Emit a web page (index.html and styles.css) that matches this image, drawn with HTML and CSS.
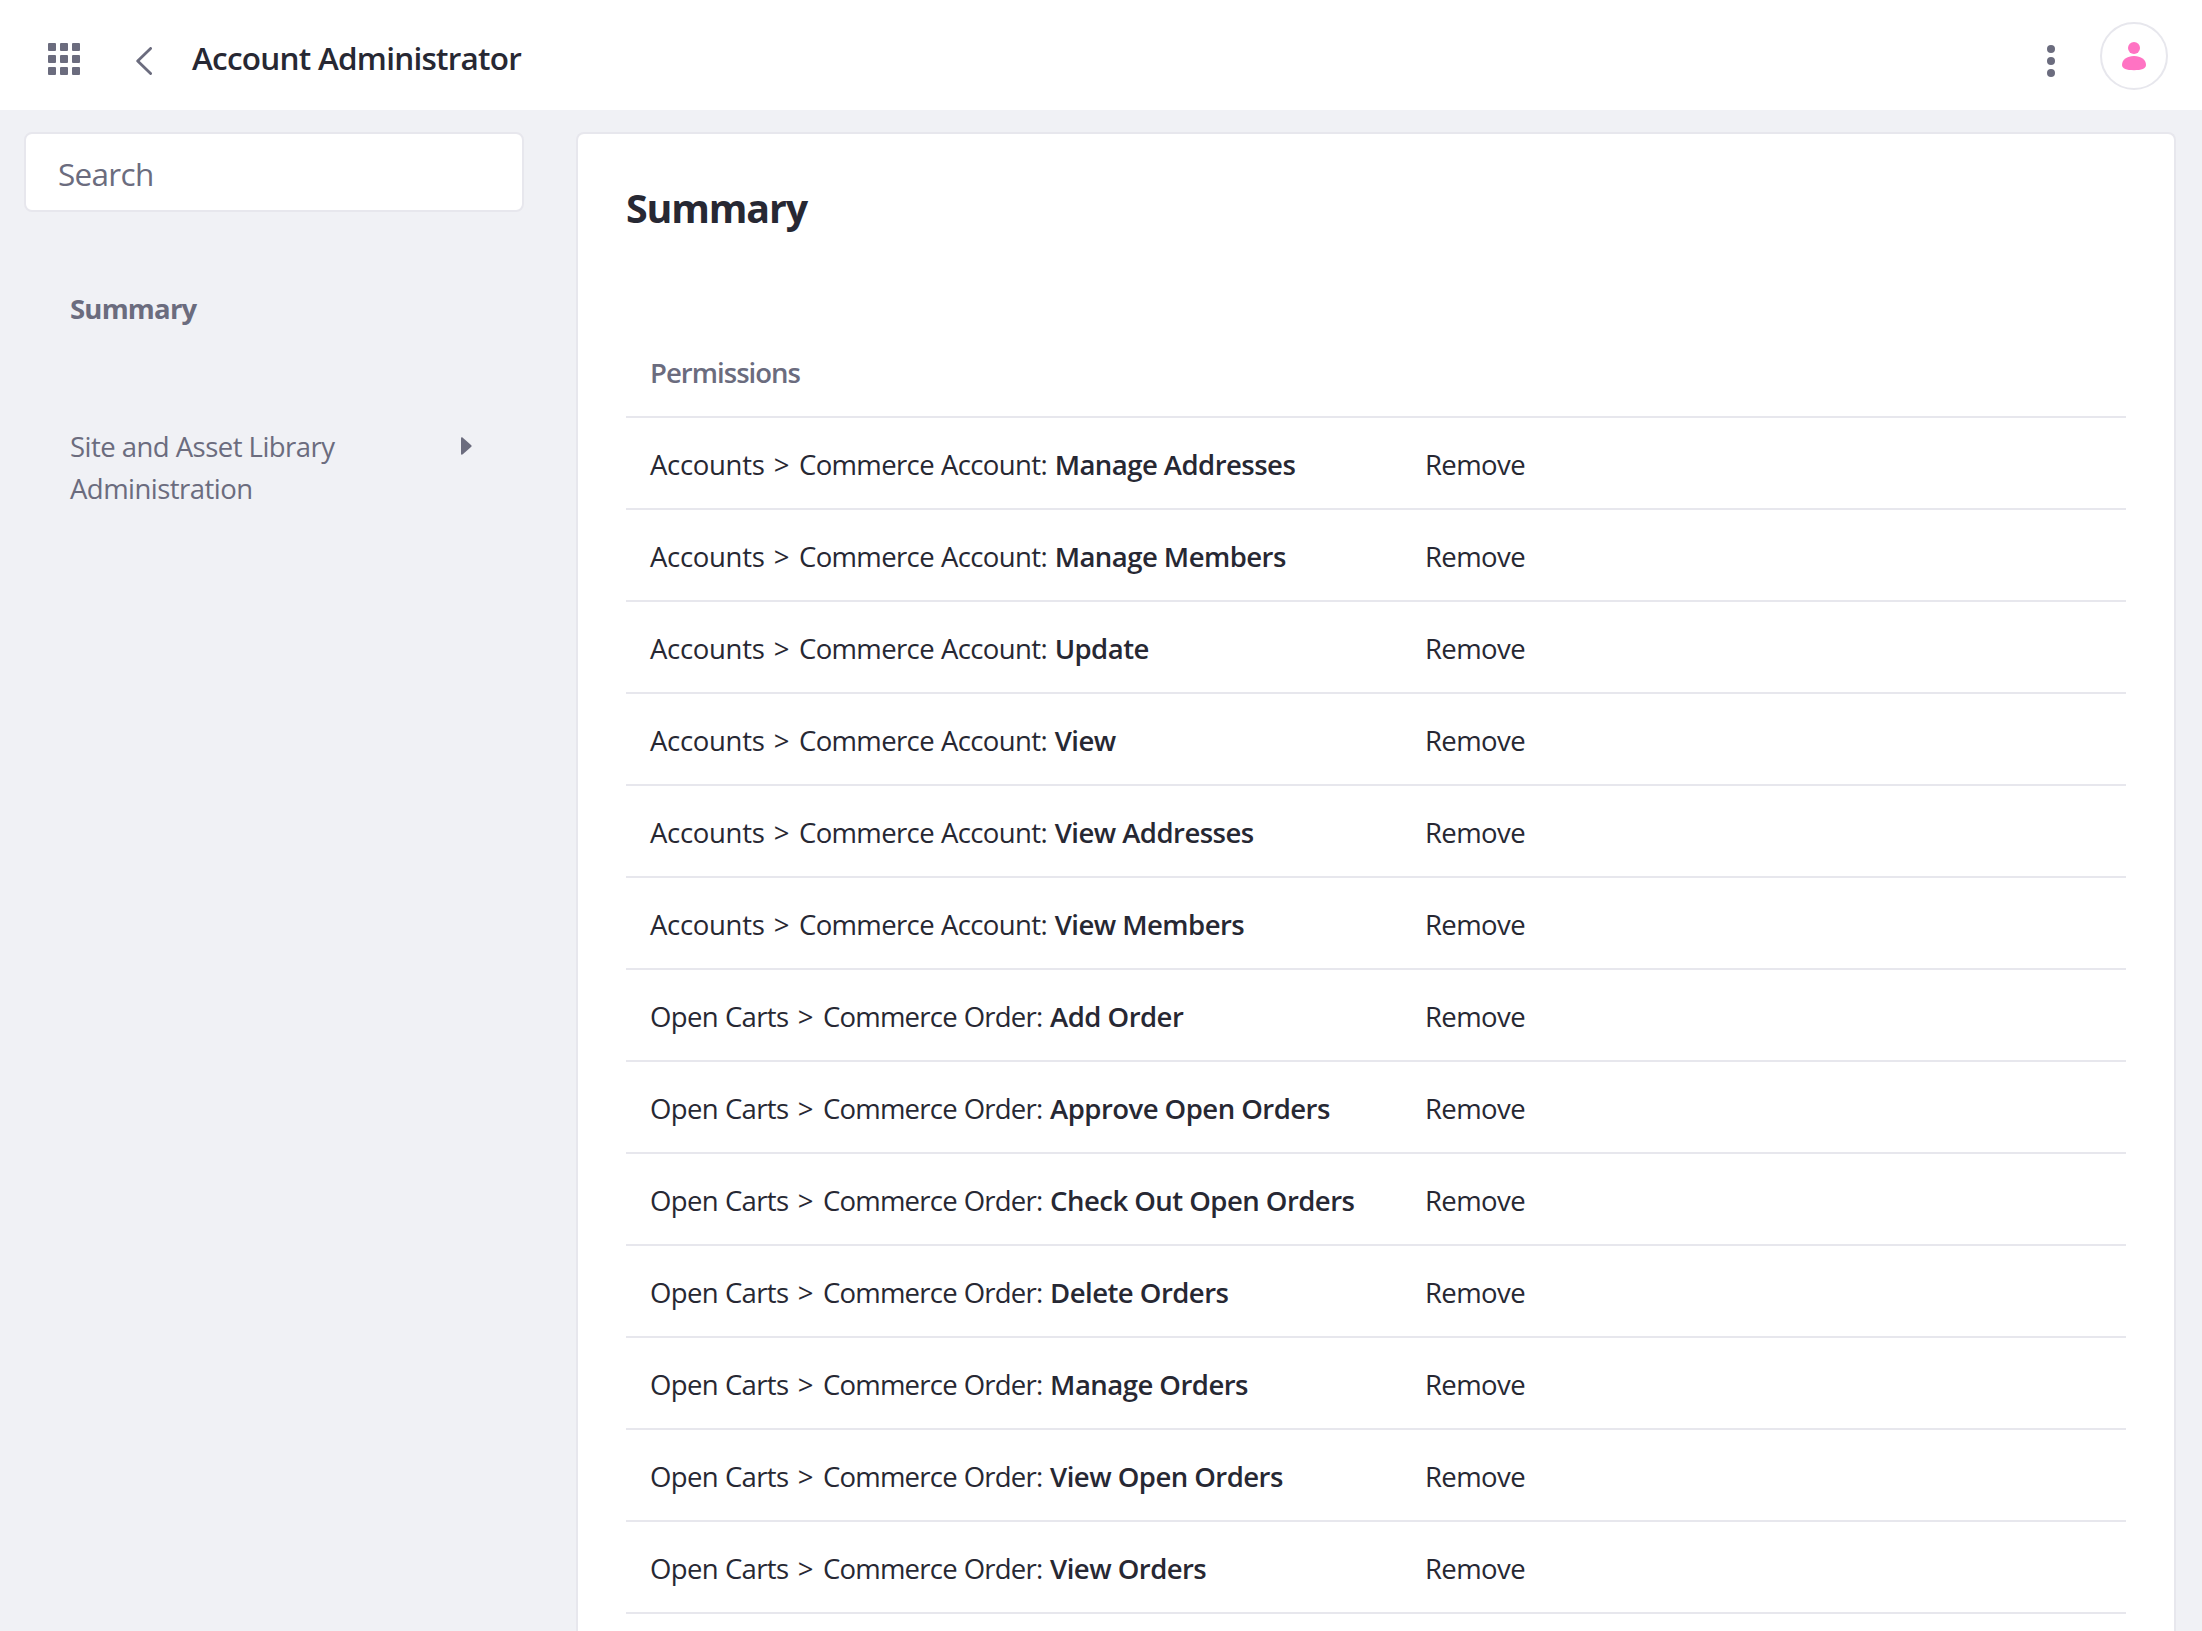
FILE: index.html
```
<!DOCTYPE html>
<html lang="en">
<head>
<meta charset="utf-8">
<title>Account Administrator</title>
<link rel="stylesheet" href="styles.css">
</head>
<body>
<header class="topbar">
  <svg class="apps" viewBox="0 0 32 32"><g fill="currentColor"><rect width="8" height="8" rx="1"/><rect x="12" width="8" height="8" rx="1"/><rect x="24" width="8" height="8" rx="1"/><rect y="12" width="8" height="8" rx="1"/><rect x="12" y="12" width="8" height="8" rx="1"/><rect x="24" y="12" width="8" height="8" rx="1"/><rect y="24" width="8" height="8" rx="1"/><rect x="12" y="24" width="8" height="8" rx="1"/><rect x="24" y="24" width="8" height="8" rx="1"/></g></svg>
  <svg class="back" viewBox="0 0 16 28"><path d="M14.600 1.400 1.700 14l12.900 12.600" fill="none" stroke="currentColor" stroke-width="2.800" stroke-linecap="round" stroke-linejoin="round"/></svg>
  <h1 class="title">Account Administrator</h1>
  <svg class="kebab" viewBox="0 0 8 32"><g fill="currentColor"><circle cx="4" cy="4" r="4"/><circle cx="4" cy="16" r="4"/><circle cx="4" cy="28" r="4"/></g></svg>
  <div class="avatar"><svg class="person" viewBox="0 0 24 28"><g fill="currentColor"><circle cx="12" cy="6" r="6"/><path d="M12 14C5 14 0 17.600 0 23c0 3.600 4.500 5.200 12 5.200s12-1.600 12-5.200c0-5.400-5-9-12-9z"/></g></svg></div>
</header>
<main class="layout">
  <aside class="sidebar">
    <div class="search">Search</div>
    <nav class="nav">
      <a class="nav-item active">Summary</a>
      <a class="nav-item group"><span>Site and Asset Library<br>Administration</span><svg class="caret" viewBox="0 0 11 18"><path d="M0 1.200C0 0 1 0 1.800.7L10.300 8.200q.7.8 0 1.600L1.800 17.300C1 18 0 18 0 16.800z" fill="currentColor"/></svg></a>
    </nav>
  </aside>
  <section class="card">
    <h2 class="heading">Summary</h2>
    <table class="permissions">
      <thead><tr><th>Permissions</th><th></th></tr></thead>
      <tbody>
        <tr><td><span class="app">Accounts</span> <span class="gt">&gt;</span> <span class="account">Commerce Account:</span> <strong>Manage Addresses</strong></td><td>Remove</td></tr>
        <tr><td><span class="app">Accounts</span> <span class="gt">&gt;</span> <span class="account">Commerce Account:</span> <strong>Manage Members</strong></td><td>Remove</td></tr>
        <tr><td><span class="app">Accounts</span> <span class="gt">&gt;</span> <span class="account">Commerce Account:</span> <strong>Update</strong></td><td>Remove</td></tr>
        <tr><td><span class="app">Accounts</span> <span class="gt">&gt;</span> <span class="account">Commerce Account:</span> <strong>View</strong></td><td>Remove</td></tr>
        <tr><td><span class="app">Accounts</span> <span class="gt">&gt;</span> <span class="account">Commerce Account:</span> <strong>View Addresses</strong></td><td>Remove</td></tr>
        <tr><td><span class="app">Accounts</span> <span class="gt">&gt;</span> <span class="account">Commerce Account:</span> <strong>View Members</strong></td><td>Remove</td></tr>
        <tr><td><span class="carts">Open Carts</span> <span class="gt">&gt;</span> <span class="order">Commerce Order:</span> <strong>Add Order</strong></td><td>Remove</td></tr>
        <tr><td><span class="carts">Open Carts</span> <span class="gt">&gt;</span> <span class="order">Commerce Order:</span> <strong>Approve Open Orders</strong></td><td>Remove</td></tr>
        <tr><td><span class="carts">Open Carts</span> <span class="gt">&gt;</span> <span class="order">Commerce Order:</span> <strong>Check Out Open Orders</strong></td><td>Remove</td></tr>
        <tr><td><span class="carts">Open Carts</span> <span class="gt">&gt;</span> <span class="order">Commerce Order:</span> <strong>Delete Orders</strong></td><td>Remove</td></tr>
        <tr><td><span class="carts">Open Carts</span> <span class="gt">&gt;</span> <span class="order">Commerce Order:</span> <strong>Manage Orders</strong></td><td>Remove</td></tr>
        <tr><td><span class="carts">Open Carts</span> <span class="gt">&gt;</span> <span class="order">Commerce Order:</span> <strong>View Open Orders</strong></td><td>Remove</td></tr>
        <tr><td><span class="carts">Open Carts</span> <span class="gt">&gt;</span> <span class="order">Commerce Order:</span> <strong>View Orders</strong></td><td>Remove</td></tr>
        <tr><td></td><td></td></tr>
      </tbody>
    </table>
  </section>
</main>
</body>
</html>
```
FILE: styles.css
```
* { box-sizing: border-box; }
html, body { height: 100%; }
body {
  margin: 0;
  display: flex;
  flex-direction: column;
  overflow: hidden;
  background: #f0f1f5;
  color: #272833;
  font: 27.5px/42px "Open Sans", "Noto Sans", sans-serif;
}
.topbar {
  flex: none;
  display: flex;
  align-items: flex-start;
  height: 110px;
  padding: 0 34px 0 48px;
  background: #fff;
}
.apps { width: 32px; height: 32px; margin-top: 43px; color: #6b6c7e; }
.back { width: 16px; height: 28px; margin: 47px 0 0 56px; color: #6b6c7e; }
.title {
  margin: 33px 0 0 40px;
  font-size: 31.5px;
  line-height: 49px;
  font-weight: 600;
  letter-spacing: -0.76px;
}
.kebab { width: 8px; height: 32px; margin: 45px 45px 0 auto; color: #6b6c7e; }
.avatar {
  display: flex;
  justify-content: center;
  width: 68px;
  height: 68px;
  margin-top: 22px;
  padding-top: 18px;
  border: 2px solid #e7e7ed;
  border-radius: 50%;
  color: #ff73c3;
}
.person { width: 24px; height: 28px; overflow: visible; }
.layout {
  flex: 1;
  min-height: 0;
  display: grid;
  grid-template-columns: 500px 1600px;
  column-gap: 52px;
  padding: 22px 26px 0 24px;
}
.search {
  height: 80px;
  padding: 15px 32px;
  border: 2px solid #e7e7ed;
  border-radius: 8px;
  background: #fff;
  color: #6b6c7e;
  font-size: 31.5px;
  line-height: 49px;
  letter-spacing: -0.7px;
}
.nav { padding: 76px 52px 0 46px; color: #6b6c7e; }
.nav-item { display: flex; justify-content: space-between; }
.active { font-weight: 700; line-height: 41px; letter-spacing: -0.79px; }
.group { margin-top: 96.5px; letter-spacing: -0.53px; }
.caret { width: 11px; height: 18px; margin-top: 11.5px; }
.card {
  padding: 50px 48px 0;
  border: 2px solid #e7e7ed;
  border-bottom: 0;
  border-radius: 8px 8px 0 0;
  background: #fff;
  overflow: hidden;
}
.heading {
  margin: 0;
  font-size: 39.4px;
  line-height: 48px;
  font-weight: 700;
  letter-spacing: -1.15px;
}
.permissions { width: 1500px; margin-top: 119px; table-layout: fixed; border-spacing: 0; line-height: 41px; }
.permissions th {
  width: 774px;
  height: 65px;
  padding: 1px 24px 23px;
  text-align: left;
  color: #6b6c7e;
  font-weight: 600;
  letter-spacing: -0.96px;
}
.permissions th + th { width: auto; }
.permissions td {
  height: 92px;
  padding: 26px 24px 23px;
  border-top: 2px solid #e7e7ed;
  white-space: nowrap;
  word-spacing: 0.5px;
}
.permissions td + td { padding-left: 25px; letter-spacing: -0.6px; }
.permissions strong { font-weight: 600; letter-spacing: -0.53px; word-spacing: 0; }
.app { letter-spacing: -0.31px; }
.account { letter-spacing: -0.63px; }
.carts { letter-spacing: -0.65px; }
.order { letter-spacing: -0.77px; }
.gt { display: inline-block; width: 19.2px; text-align: center; }
```
